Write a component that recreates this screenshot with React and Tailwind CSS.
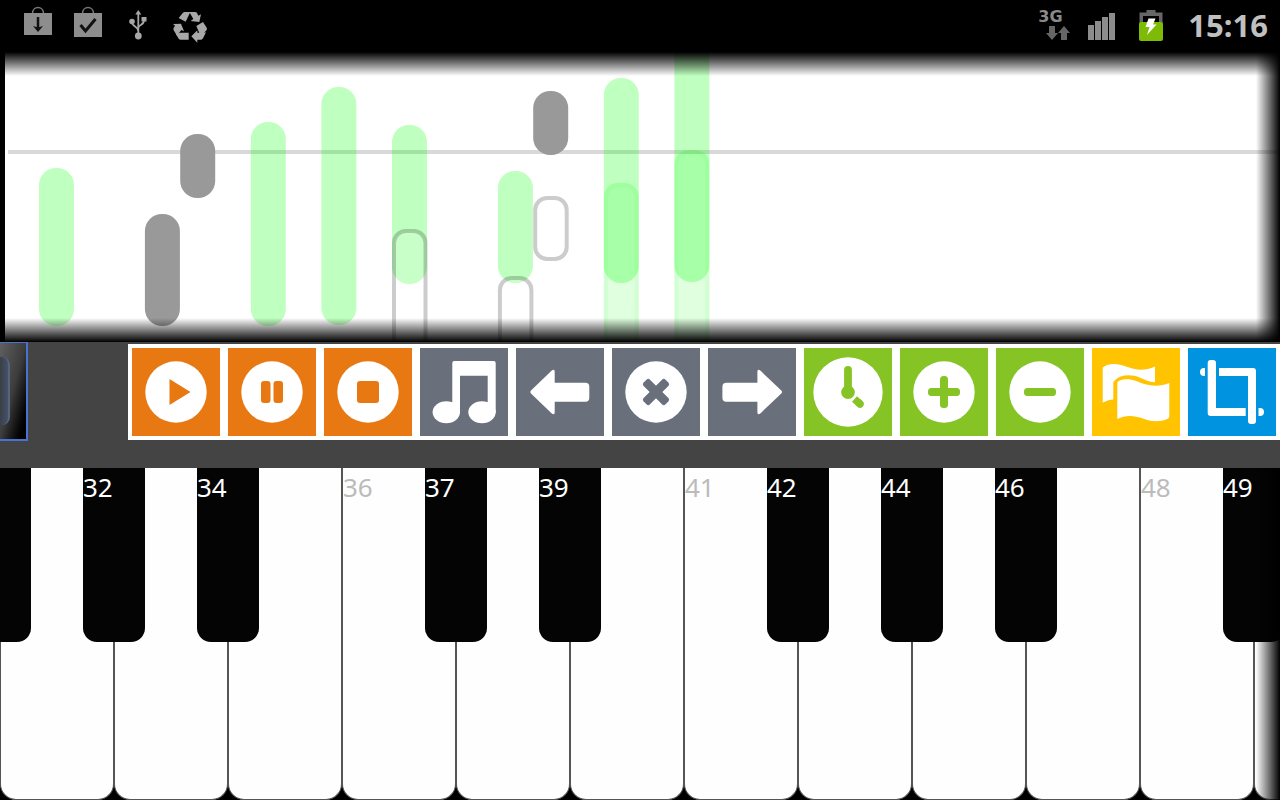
/**
 * App.jsx - piano roll with transport toolbar and on-screen keyboard.
 */
const LANE = 35.3;

// top / bottom are measured from the upper edge of the roll
const NOTES = [
  { lane: 0, top: 116, bottom: 274, kind: 'played' },
  { lane: 3, top: 162, bottom: 274, kind: 'sharp' },
  { lane: 4, top: 82, bottom: 146, kind: 'sharp' },
  { lane: 6, top: 70, bottom: 274, kind: 'played' },
  { lane: 8, top: 35, bottom: 273, kind: 'played' },
  { lane: 10, top: 73, bottom: 232, kind: 'played' },
  { lane: 10, top: 177, bottom: 340, kind: 'ghost' },
  { lane: 13, top: 119, bottom: 231, kind: 'played' },
  { lane: 13, top: 224, bottom: 340, kind: 'ghost' },
  { lane: 14, top: 39, bottom: 103, kind: 'sharp' },
  { lane: 14, top: 144, bottom: 209, kind: 'ghost' },
  { lane: 16, top: 26, bottom: 231, kind: 'played' },
  { lane: 16, top: 131, bottom: 340, kind: 'echo' },
  { lane: 18, top: -30, bottom: 230, kind: 'played' },
  { lane: 18, top: 98, bottom: 340, kind: 'echo' },
];

const KEYS = [
  { black: '', hasBlack: true },
  { black: '32', hasBlack: true },
  { black: '34', hasBlack: true },
  { white: '36' },
  { black: '37', hasBlack: true },
  { black: '39', hasBlack: true },
  { white: '41' },
  { black: '42', hasBlack: true },
  { black: '44', hasBlack: true },
  { black: '46', hasBlack: true },
  { white: '48' },
  { black: '49', hasBlack: true },
];

const Disc = () => <circle cx="44" cy="44" r="30.7" fill="#fff" />;

const TOOLS = [
  {
    label: 'Play', color: 'bg-[#e87912] text-[#e87912]',
    icon: <><Disc /><path d="M37.5 31v26L58.5 44z" fill="currentColor" /></>,
  },
  {
    label: 'Pause', color: 'bg-[#e87912] text-[#e87912]',
    icon: (
      <>
        <Disc />
        <rect x="33" y="33" width="9.5" height="22" rx="3" fill="currentColor" />
        <rect x="45.5" y="33" width="9.5" height="22" rx="3" fill="currentColor" />
      </>
    ),
  },
  {
    label: 'Stop', color: 'bg-[#e87912] text-[#e87912]',
    icon: <><Disc /><rect x="33" y="33" width="22" height="22" rx="3" fill="currentColor" /></>,
  },
  {
    label: 'Notes', color: 'bg-[#6a707b] text-[#6a707b]',
    icon: (
      <g fill="#fff">
        <path d="M32.3 65V15q0-2 2-2h39.4q2 0 2 2v50h-8V27.7H40V65z" />
        <ellipse cx="26.3" cy="64.3" rx="13.7" ry="11" />
        <ellipse cx="62" cy="64.3" rx="13.7" ry="11" />
      </g>
    ),
  },
  {
    label: 'Previous', color: 'bg-[#6a707b] text-[#6a707b]',
    icon: <path d="M15 42.5 35.5 22.8q3.2-2.4 3.2 1v10.9h30.6q4 0 4 4v11q0 4-4 4H38.7v10.5q0 3.4-3.2 1L15 45.5q-1.5-1.5 0-3z" fill="#fff" />,
  },
  {
    label: 'Clear', color: 'bg-[#6a707b] text-[#6a707b]',
    icon: (
      <>
        <Disc />
        <g fill="currentColor" transform="rotate(45 44 44)">
          <rect x="28.5" y="39.5" width="31" height="9" rx="2.5" />
          <rect x="39.5" y="28.5" width="9" height="31" rx="2.5" />
        </g>
      </>
    ),
  },
  {
    label: 'Next', color: 'bg-[#6a707b] text-[#6a707b]',
    icon: <path d="M73.3 42.5 52.6 22.8q-3.2-2.4-3.2 1v10.9H18.4q-4 0-4 4v11q0 4 4 4h31v10.5q0 3.4 3.2 1l20.7-19.7q1.5-1.5 0-3z" fill="#fff" />,
  },
  {
    label: 'Tempo', color: 'bg-[#86c324] text-[#86c324]',
    icon: (
      <>
        <circle cx="44" cy="44" r="34.7" fill="#fff" />
        <rect x="40.1" y="18" width="7.8" height="28" rx="3.9" fill="currentColor" />
        <circle cx="44" cy="44.3" r="6.8" fill="currentColor" />
        <g stroke="currentColor" strokeWidth="7.5">
          <path d="m50.5 51 5 4.500" />
          <path d="m55 55 1 1" strokeLinecap="round" />
        </g>
      </>
    ),
  },
  {
    label: 'Zoom in', color: 'bg-[#86c324] text-[#86c324]',
    icon: (
      <>
        <Disc />
        <rect x="28" y="40" width="32" height="8" rx="3.5" fill="currentColor" />
        <rect x="40" y="28" width="8" height="32" rx="3.5" fill="currentColor" />
      </>
    ),
  },
  {
    label: 'Zoom out', color: 'bg-[#86c324] text-[#86c324]',
    icon: <><Disc /><rect x="28" y="40" width="32" height="8" rx="3.5" fill="currentColor" /></>,
  },
  {
    label: 'Markers', color: 'bg-[#ffc300] text-[#ffc300]',
    icon: (
      <g fill="#fff">
        <path d="M10.7 19.5C16 15 26 15 34 18.500c10 4 19 4.500 29 0v15.800c-6-.5-10-2.300-15-4.600-9-4-20-3-25.500 3-1 1-1.200 2-1.200 4V51.500c-4 .2-7 1.200-10.600 3.200z" />
        <path d="M25.300 34.500c1-3 11-5 19-1.500s20 7.500 33 2v33c0 1.500-.8 2.500-2 3-7 3-15 3-23 0s-18-5-27 0z" />
      </g>
    ),
  },
  {
    label: 'Crop', color: 'bg-[#0093e0] text-[#0093e0]',
    icon: (
      <g fill="#fff">
        <path d="M19.700 15q0-3 3-3h2.300q3 0 3 3v45h29.700v8H22.700q-3 0-3-3z" />
        <path d="M31 20h34q3 0 3 3v50q0 3-3 3h-2q-3 0-3-3V28H31z" />
        <path d="M17 20v8h-1a4 4 0 0 1 0-8z" />
        <path d="M70.500 60v8H72a4 4 0 0 0 0-8z" />
      </g>
    ),
  },
];

function Bag({ children, label, bottom }) {
  return (
    <svg className="w-7 h-[34px]" viewBox="0 0 28 34" role="img" aria-label={label}>
      <path d="M8.500 8.500C8.500 .5 19.500 .5 19.500 8.500" fill="none" stroke="#777" strokeWidth="1.500" />
      <rect y="8" width="28" height={bottom} fill="#8d8d8d" />
      {children}
    </svg>
  );
}

function StatusBar() {
  return (
    <header className="h-13 shrink-0 flex justify-between bg-black pl-6 pr-3">
      <div className="flex items-start gap-[22px] pt-[5px]">
        <Bag label="Download" bottom={22}>
          <path d="M14 12v13" stroke="#111" strokeWidth="2.500" />
          <path d="m9 21 5 1.500 5-1.500-5 6z" fill="#111" />
        </Bag>
        <Bag label="Installed" bottom={24}>
          <path d="m6.500 20 5 6L21.500 14" fill="none" stroke="#111" strokeWidth="3" />
        </Bag>
        <div className="flex items-start gap-5">
          <svg className="w-7 h-[36px]" viewBox="0 0 28 36" role="img" aria-label="USB">
            <g fill="none" stroke="#a6a6a6" strokeWidth="1.800">
              <path d="M14.300 8v22M8 17c0 5 6 4 6.300 9M20 15c0 6-5.500 4-5.700 8" />
            </g>
            <g fill="#a6a6a6">
              <path d="m14.300 5 3 4.500h-6z" />
              <circle cx="8" cy="16.500" r="2.800" />
              <path d="M17.500 12h5v4.500h-5z" />
              <circle cx="14.300" cy="31" r="3.400" />
            </g>
          </svg>
          <svg className="w-9 h-8 mt-1.5" viewBox="510 32 108 96" role="img" aria-label="Recycle">
            <g fill="#a8a8a8">
              <path d="M543 37q2-2 5-2h17l-14 29-21-11z" />
              <path d="M562 35h18q3 0 5 3l4 8 8-4-5 23-26-3 8-6z" />
              <path d="m583 77 20-12 11 17q2 4 0 7l-8 9h-14z" />
              <path d="M612 96l-9 18q-2 4-6 4h-11v9l-18-19 18-18v7h18q5 0 8-1z" />
              <path d="M560 97v21h-24q-4 0-6-3l-8-13q6-5 14-5z" />
              <path d="m513 71 24-1 9 23-8-4-13 17-10-16q-2-4 0-7l4-7z" />
            </g>
          </svg>
        </div>
      </div>

      <div className="flex items-start">
        <div className="w-8 pt-[11px] mr-[18px]">
          <div className="font-['DejaVu_Sans',sans-serif] font-bold text-base leading-3 text-[#8a8a8a]">3G</div>
          <svg className="w-6 h-4 ml-2 mt-0.5" viewBox="0 0 24 16" aria-hidden="true">
            <path d="M3 1h6v7h3l-6 7-6-7h3z" fill="#666" />
            <path d="M15 15h6V8h3l-6-7-6 7h3z" fill="#666" />
          </svg>
        </div>
        <svg className="w-7 h-7 mt-3 mr-[22px]" viewBox="0 0 28 28" role="img" aria-label="Signal">
          <g fill="#8c8c8c">
            <rect x="0" y="13" width="6" height="15" />
            <rect x="7" y="9" width="6" height="19" />
            <rect x="14" y="5" width="6" height="23" />
            <rect x="21" y="1" width="6" height="27" />
          </g>
        </svg>
        <svg className="w-[26px] h-8 mt-2.5 mr-6" viewBox="0 0 26 32" role="img" aria-label="Charging">
          <path d="M8.500 0h9v2.500h7V14H1.500V2.500h7z" fill="#666" />
          <path d="M5 6h16v7H5z" fill="#000" />
          <rect x="1" y="12" width="24" height="19" rx="2" fill="#7ebb06" />
          <path d="M10.500 8.500h7l-2.500 6h3.500L9 25l2.500-8h-4z" fill="#fff" />
        </svg>
        <time className="font-['Noto_Sans',sans-serif] font-bold text-[31px] leading-[50px] text-[#c0c0c0]">15:16</time>
      </div>
    </header>
  );
}

function Note({ lane, top, bottom, kind }) {
  const x = 34 + lane * LANE;
  const h = bottom - top;
  if (kind === 'ghost') {
    return (
      <rect
        x={x + 2} y={top + 2} width="31.500" height={h - 4} rx="12"
        fill="#fff" fillOpacity="0.150" stroke="#000" strokeOpacity="0.200" strokeWidth="4"
      />
    );
  }
  if (kind === 'echo') {
    return (
      <g fill="#0f0">
        <rect x={x} y={top} width="35" height={h} rx="14" fillOpacity="0.125" />
        <rect x={x + 2} y={top + 2} width="31" height={h} rx="13" fill="none" stroke="#0f0" strokeOpacity="0.060" strokeWidth="4" />
      </g>
    );
  }
  return (
    <rect
      x={x} y={top} width="35" height={h} rx="17"
      fill={kind === 'sharp' ? '#999' : '#0f0'}
      fillOpacity={kind === 'sharp' ? 1 : 0.25}
    />
  );
}

function PianoRoll() {
  return (
    <section className="h-[290px] shrink-0 bg-black pl-[5px]" aria-label="Piano roll">
      <div className="relative h-full bg-white overflow-hidden">
        <svg className="block w-full h-full" aria-hidden="true">
          <rect x="3" y="98" width="100%" height="4" fill="#000" fillOpacity="0.150" />
          {NOTES.map((n) => (
            <Note key={`${n.lane}-${n.top}`} {...n} />
          ))}
        </svg>
        {/* Edge fades */}
        <div className="absolute inset-x-0 top-0 h-6 bg-linear-to-b from-black to-transparent" />
        <div className="absolute inset-x-0 bottom-0 h-6 bg-linear-to-t from-black to-transparent" />
        <div className="absolute inset-y-0 right-0 w-6 bg-linear-to-l from-black to-transparent" />
      </div>
    </section>
  );
}

function Toolbar() {
  return (
    <div className="h-[126px] shrink-0 flex items-start justify-between bg-[#444] overflow-hidden">
      <div className="w-7 h-[99px] shrink-0 flex items-center border-r-2 border-b-2 border-t border-[#4a72d0] bg-linear-to-br from-[#606060] via-[#3c3c3c] to-black">
        <div className="w-2.5 h-[68px] rounded-r-lg border-r-2 border-[#56647c] bg-linear-to-r from-[#3a4048] to-[#465068]" />
      </div>
      <div className="flex shrink-0 mt-0.5 bg-white" role="toolbar" aria-label="Transport">
        {TOOLS.map((tool) => (
          <button key={tool.label} type="button" aria-label={tool.label} className="p-1">
            <span className={`block size-22 ${tool.color}`}>
              <svg className="block size-full" viewBox="0 0 88 88" aria-hidden="true">{tool.icon}</svg>
            </span>
          </button>
        ))}
      </div>
    </div>
  );
}

function Keyboard() {
  return (
    <section
      className="relative flex-1 min-h-[332px] flex overflow-hidden bg-black font-['Noto_Sans',sans-serif] text-[26px] leading-[38px]"
      aria-label="Keyboard"
    >
      {KEYS.map((k, i) => (
        <div key={i} className="relative w-[114px] shrink-0">
          <button
            type="button"
            aria-label={k.white ? undefined : `White key ${i + 1}`}
            className="flex w-full h-full items-start rounded-b-2xl border border-t-0 border-[#555] bg-[#fefefe] text-[#bbb]"
          >
            {k.white}
          </button>
          {k.hasBlack && (
            <button
              type="button"
              aria-label={k.black ? undefined : 'Black key'}
              className="absolute top-0 -left-[31px] z-10 flex items-start w-[62px] h-[174px] rounded-b-[14px] bg-[#040404] text-white"
            >
              {k.black}
            </button>
          )}
        </div>
      ))}
      <div className="absolute inset-y-0 right-0 z-20 w-6 bg-linear-to-l from-black to-transparent pointer-events-none" />
    </section>
  );
}

export default function App() {
  return (
    <main className="min-h-screen flex flex-col overflow-hidden bg-black">
      <StatusBar />
      <PianoRoll />
      <Toolbar />
      <Keyboard />
    </main>
  );
}
